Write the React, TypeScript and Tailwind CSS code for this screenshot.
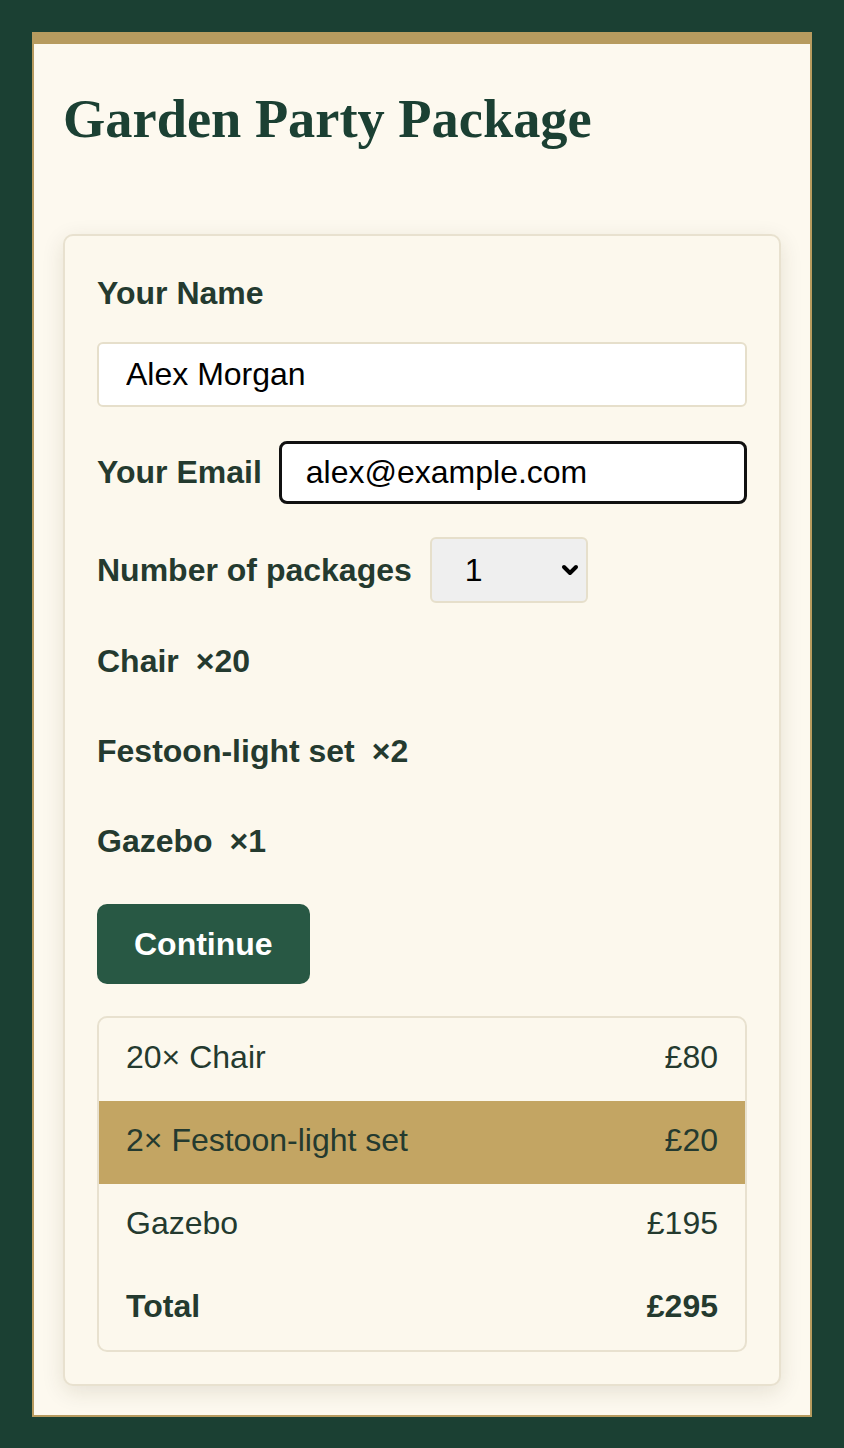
import { ChevronDown } from "lucide-react";

type Line = { label: string; price: string; highlight?: boolean; bold?: boolean };

const items = [
  { name: "Chair", qty: 20 },
  { name: "Festoon-light set", qty: 2 },
  { name: "Gazebo", qty: 1 },
];

const lines: Line[] = [
  { label: "20× Chair", price: "£80" },
  { label: "2× Festoon-light set", price: "£20", highlight: true },
  { label: "Gazebo", price: "£195" },
  { label: "Total", price: "£295", bold: true },
];

export default function App() {
  return (
    <div className="min-h-[1448px] bg-[#1b4033] p-[32px] font-['Liberation_Sans',Arial,sans-serif] text-[32px] leading-[1.5] text-[#243a2f]">
      <div className="border-2 border-t-[12px] border-[#b79b5f] bg-[#fdf9ef] px-[29px] pb-[29px]">
        <h1 className="mt-[43px] font-['Liberation_Serif','Times_New_Roman',serif] text-[54.4px] font-bold leading-[64px] text-[#1b4033]">
          Garden Party Package
        </h1>

        <div className="mt-[83px] rounded-[10px] border-2 border-[#e8e1cf] bg-[#fcf8ed] px-[32px] pb-[32px] pt-[33px] shadow-[0_6px_22px_rgba(60,50,20,0.12)]">
          <label className="block font-bold">Your Name</label>
          <input
            className="mt-[25px] block h-[65px] w-full rounded-[6px] border-2 border-[#e6dfcb] bg-white px-[27px] text-black outline-none"
            defaultValue="Alex Morgan"
          />

          <div className="mt-[33px] flex h-[64px] items-center gap-[17px]">
            <label className="shrink-0 font-bold">Your Email</label>
            <input
              className="block h-[63px] min-w-0 flex-1 rounded-[8px] border-[3px] border-[#111] bg-white px-[24px] text-black outline-none"
              defaultValue="alex@example.com"
            />
          </div>

          <div className="mt-[33px] flex h-[66px] items-center gap-[18px]">
            <label className="shrink-0 font-bold">Number of packages</label>
            <div className="relative h-[66px] w-[158px]">
              <select className="h-full w-full appearance-none rounded-[6px] border-2 border-[#e6dfcb] bg-[#efefef] pl-[33px] text-black outline-none">
                <option>1</option>
                <option>2</option>
                <option>3</option>
              </select>
              <ChevronDown className="pointer-events-none absolute right-[6px] top-1/2 h-[24px] w-[24px] -translate-y-1/2 text-black" strokeWidth={4} />
            </div>
          </div>

          <div className="mt-[34px] flex flex-col gap-[42px]">
            {items.map((it) => (
              <div key={it.name} className="font-bold">
                {it.name}
                <span className="ml-[17px]">×{it.qty}</span>
              </div>
            ))}
          </div>

          <button className="mt-[39px] h-[80px] rounded-[10px] bg-[#285844] px-[37px] font-bold text-white" type="button">
            Continue
          </button>

          <div className="mt-[32px] overflow-hidden rounded-[10px] border-2 border-[#e8e1cf]">
            {lines.map((l) => (
              <div
                key={l.label}
                className={`flex h-[83px] items-center justify-between px-[27px] pb-[5px] ${l.highlight ? "bg-[#c3a563]" : ""} ${l.bold ? "font-bold" : ""}`}
              >
                <span>{l.label}</span>
                <span>{l.price}</span>
              </div>
            ))}
          </div>
        </div>
      </div>
    </div>
  );
}
